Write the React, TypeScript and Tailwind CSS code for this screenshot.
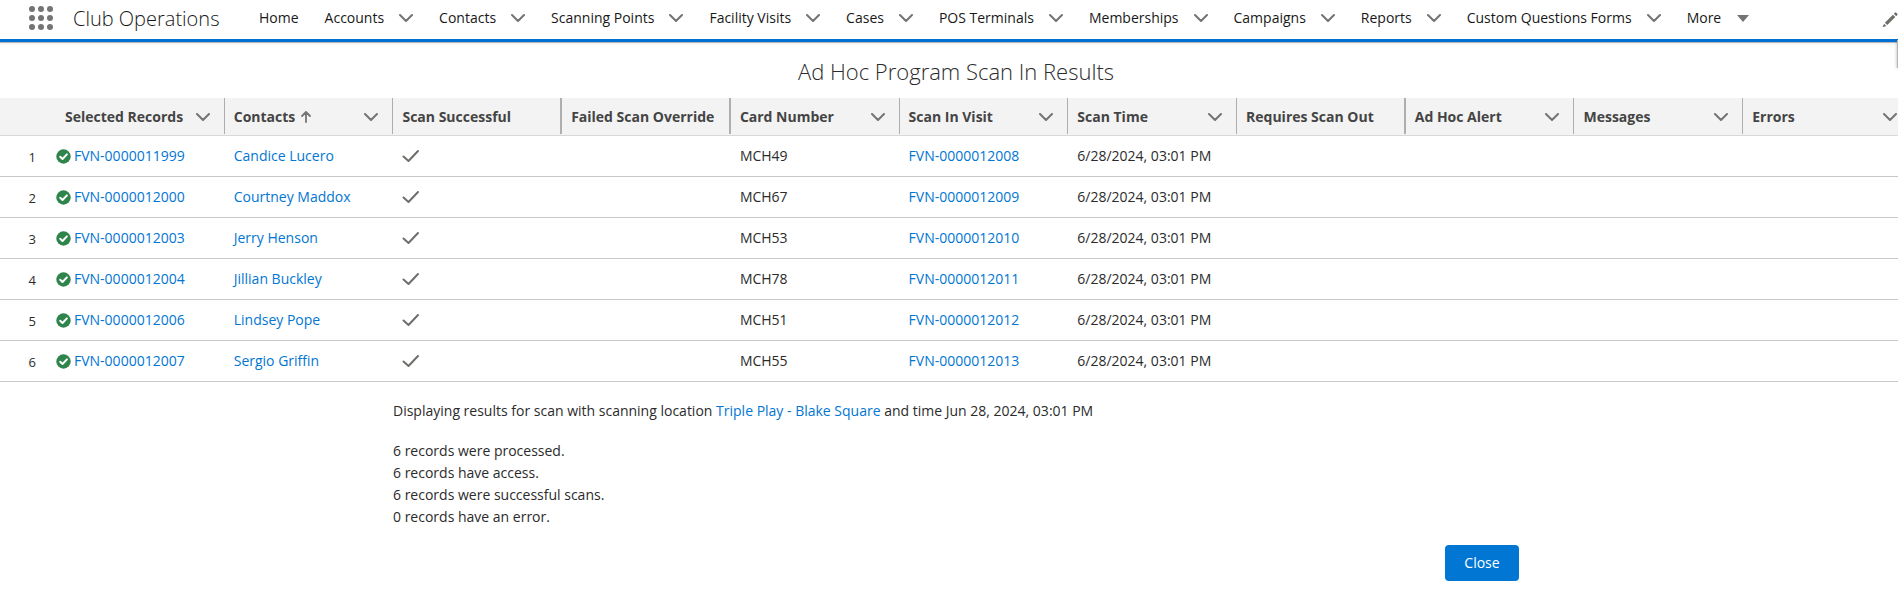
import React from 'react';

interface NavTab {
  label: string;
  menu: boolean;
}

interface Column {
  label: string;
  menu: boolean;
  sorted?: boolean;
}

interface ScanRecord {
  record: string;
  contact: string;
  card: string;
  visit: string;
}

const tabs: NavTab[] = [
  { label: 'Home', menu: false },
  { label: 'Accounts', menu: true },
  { label: 'Contacts', menu: true },
  { label: 'Scanning Points', menu: true },
  { label: 'Facility Visits', menu: true },
  { label: 'Cases', menu: true },
  { label: 'POS Terminals', menu: true },
  { label: 'Memberships', menu: true },
  { label: 'Campaigns', menu: true },
  { label: 'Reports', menu: true },
  { label: 'Custom Questions Forms', menu: true }
];

const columns: Column[] = [
  { label: 'Selected Records', menu: true },
  { label: 'Contacts', menu: true, sorted: true },
  { label: 'Scan Successful', menu: false },
  { label: 'Failed Scan Override', menu: false },
  { label: 'Card Number', menu: true },
  { label: 'Scan In Visit', menu: true },
  { label: 'Scan Time', menu: true },
  { label: 'Requires Scan Out', menu: false },
  { label: 'Ad Hoc Alert', menu: true },
  { label: 'Messages', menu: true },
  { label: 'Errors', menu: true }
];

const records: ScanRecord[] = [
  { record: 'FVN-0000011999', contact: 'Candice Lucero', card: 'MCH49', visit: 'FVN-0000012008' },
  { record: 'FVN-0000012000', contact: 'Courtney Maddox', card: 'MCH67', visit: 'FVN-0000012009' },
  { record: 'FVN-0000012003', contact: 'Jerry Henson', card: 'MCH53', visit: 'FVN-0000012010' },
  { record: 'FVN-0000012004', contact: 'Jillian Buckley', card: 'MCH78', visit: 'FVN-0000012011' },
  { record: 'FVN-0000012006', contact: 'Lindsey Pope', card: 'MCH51', visit: 'FVN-0000012012' },
  { record: 'FVN-0000012007', contact: 'Sergio Griffin', card: 'MCH55', visit: 'FVN-0000012013' }
];

const summary = [
  '6 records were processed.',
  '6 records have access.',
  '6 records were successful scans.',
  '0 records have an error.'
];

const scanTime = '6/28/2024, 03:01 PM';

const ChevronIcon: React.FC = () => (
  <svg width="14" height="8" viewBox="0 0 14 8" fill="none" stroke="#747474" strokeWidth="2" strokeLinecap="round" strokeLinejoin="round">
    <path d="M1 1l6 6 6-6" />
  </svg>
);

const CheckIcon: React.FC = () => (
  <svg width="18" height="14" viewBox="0 0 18 14" fill="none" stroke="#706e6b" strokeWidth="2" strokeLinecap="round" strokeLinejoin="round">
    <path d="M1.500 7.500l5 4.500L16 2" />
  </svg>
);

const SuccessIcon: React.FC = () => (
  <svg width="15" height="15" viewBox="0 0 15 15" className="shrink-0">
    <circle cx="7.5" cy="7.5" r="7.2" fill="#2e844a" />
    <path d="M4.200 7.800l2.300 2.200 4.400-4.600" fill="none" stroke="#fff" strokeWidth="2" strokeLinecap="round" strokeLinejoin="round" />
  </svg>
);

const Header: React.FC = () => (
  <header className="flex h-[42px] items-start overflow-hidden border-b-3 border-[#0070d2] bg-white">
    <button aria-label="App Launcher" className="ml-[29px] mt-1.5 shrink-0">
      <svg width="24" height="24" viewBox="0 0 24 24" fill="#747474">
        {[3, 12, 21].map((y) => [3, 12, 21].map((x) => <circle key={`${x}-${y}`} cx={x} cy={y} r="3" />))}
      </svg>
    </button>
    <span className="ml-5 w-[186px] shrink-0 text-xl font-light leading-[38px] text-[#181818]">Club Operations</span>
    <nav className="flex flex-1 gap-[26px] whitespace-nowrap leading-9 text-[#181818]">
      {tabs.map((tab) => (
        <div key={tab.label} className="flex items-center gap-[15px]">
          <a href="#">{tab.label}</a>
          {tab.menu && (
            <button aria-label={`${tab.label} list`}>
              <ChevronIcon />
            </button>
          )}
        </div>
      ))}
      <button className="flex items-center gap-4">
        More
        <svg width="12" height="7" viewBox="0 0 12 7" fill="#747474">
          <path d="M0 0h12L6 7z" />
        </svg>
      </button>
    </nav>
    <button aria-label="Edit navigation" className="mt-3 shrink-0">
      <svg width="16" height="16" viewBox="0 0 16 16" fill="#706e6b">
        <path d="M11.800 1.800l1.100-1.100q.7-.7 1.400 0l1 1q.7.7 0 1.400l-1.100 1.100z" />
        <path d="M10.900 2.700l2.400 2.400-8 8-2.400-2.400z" />
        <path d="M2.100 11.700l2.300 2.300-3.100 1q-.7.100-.5-.6z" />
      </svg>
    </button>
  </header>
);

const ResultsTable: React.FC = () => (
  <table className="w-full table-fixed border-separate border-spacing-0 whitespace-nowrap text-left">
    <colgroup>
      <col className="w-[56px]" />
      {columns.map((column) => (
        <col key={column.label} />
      ))}
    </colgroup>
    <thead>
      <tr className="bg-[#f3f3f3] text-[#444444]">
        <th className="border-b border-[#d8d8d8] p-0" aria-label="Row number" />
        {columns.map((column) => (
          <th key={column.label} scope="col" className="border-b border-[#d8d8d8] p-0 pb-px font-bold">
            <div
              className={`flex h-9 items-center justify-between border-[#aeaeae] pl-[9px] pt-px ${
                column.menu ? 'border-r pr-[14px]' : 'border-r-2'
              }`}
            >
              <span className="flex items-center gap-1.5">
                {column.label}
                {column.sorted && (
                  <svg width="10" height="12" viewBox="0 0 10 12" fill="none" stroke="#747474" strokeWidth="1.800" strokeLinecap="round" strokeLinejoin="round">
                    <path d="M5 11V1.200M1 5l4-4 4 4" />
                  </svg>
                )}
              </span>
              {column.menu && (
                <button aria-label={`Show ${column.label} column actions`}>
                  <ChevronIcon />
                </button>
              )}
            </div>
          </th>
        ))}
      </tr>
    </thead>
    <tbody>
      {records.map((row, index) => (
        <tr key={row.record} className="*:h-[41px] *:border-b *:border-[#c9c9c9] *:p-0 *:pl-[9px]">
          <td>
            <span className="block w-[27px] pt-0.5 text-right text-[13px]">{index + 1}</span>
          </td>
          <td>
            <div className="-ml-[9px] flex items-center gap-[3px]">
              <SuccessIcon />
              <a href="#" className="text-[#0176d3]">{row.record}</a>
            </div>
          </td>
          <td>
            <a href="#" className="text-[#0176d3]">{row.contact}</a>
          </td>
          <td aria-label="Yes">
            <CheckIcon />
          </td>
          <td />
          <td>{row.card}</td>
          <td>
            <a href="#" className="text-[#0176d3]">{row.visit}</a>
          </td>
          <td>{scanTime}</td>
          <td />
          <td />
          <td />
          <td />
        </tr>
      ))}
    </tbody>
  </table>
);

const App: React.FC = () => {
  return (
    <div className="relative overflow-hidden bg-white font-['Segoe_UI','Open_Sans',sans-serif] text-sm text-[#2b2b2b]">
      <Header />
      <div className="h-1 border-t border-[#b5b5b5] bg-gradient-to-b from-[#f3f3f3] to-white" />

      {/* Collapsed side panel handle */}
      <div className="absolute right-0 top-10 h-7 w-px bg-[#b5b5b5] shadow-[0_0_3px_#747474]" />

      {/* The table runs slightly past the right edge of the window */}
      <main className="w-[calc(100%+14px)]">
        <h1 className="pb-1.5 pt-1 text-center text-[22px] font-light leading-[42px]">Ad Hoc Program Scan In Results</h1>
        <ResultsTable />

        <section className="pl-[393px] pt-[18px] leading-[22px]">
          <p>
            Displaying results for scan with scanning location{' '}
            <a href="#" className="text-[#0176d3]">Triple Play - Blake Square</a> and time Jun 28, 2024, 03:01 PM
          </p>
          <div className="mt-[18px]">
            {summary.map((line) => (
              <p key={line}>{line}</p>
            ))}
          </div>
        </section>

        <div className="mt-[17px] flex justify-end pr-[393px]">
          <button className="h-9 w-[74px] rounded bg-[#0176d3] text-white">Close</button>
        </div>
      </main>
    </div>
  );
};

export default App;
